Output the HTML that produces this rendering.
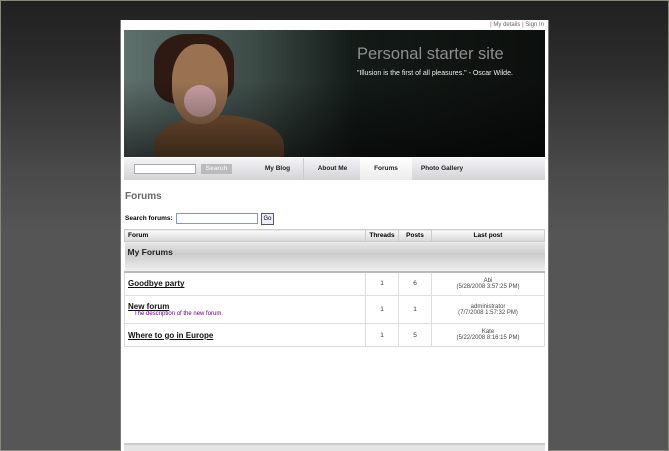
<!DOCTYPE html>
<html><head><style>
*{margin:0;padding:0;box-sizing:border-box}
html,body{width:669px;height:451px;overflow:hidden;background:#3a3a3a}
body{font-family:"Liberation Sans",sans-serif;position:relative}
#bg{position:absolute;left:0;top:0;width:669px;height:451px;background:linear-gradient(180deg,#202020 0px,#2e2e2e 70px,#4a4a4a 170px,#555 230px,#565656 451px);border:1px solid #8a8878}
#page{position:absolute;left:120px;top:20px;width:429px;height:431px;background:#fff;border-left:1px solid #777;border-right:1px solid #777}
.top{position:absolute;right:4px;top:2px;font-size:6px;color:#666}
.top span{color:#a04080}
#hdr{position:absolute;left:3px;top:10px;width:421px;height:127px;background:linear-gradient(90deg,#5e706c 0%,#3e4c48 30%,#131a17 55%,#0c0f0d 100%);overflow:hidden}
#hdr .shade{position:absolute;left:0;top:0;right:0;bottom:0;background:linear-gradient(rgba(0,0,0,0) 40%,rgba(0,0,0,.55))}
.face{position:absolute;left:48px;top:14px;width:56px;height:80px;border-radius:45%;background:#9a7252}
.hair{position:absolute;left:30px;top:4px;width:80px;height:70px;border-radius:40% 40% 30% 30%;background:#2e1a12}
.body{position:absolute;left:30px;top:85px;width:130px;height:60px;border-radius:50% 50% 0 0;background:#7e5636}
.gum{position:absolute;left:60px;top:55px;width:32px;height:32px;border-radius:50%;background:#c9a0a2}
.title{position:absolute;left:233px;top:15px;color:#8e8e8e;font-size:16.5px}
.quote{position:absolute;left:233px;top:40px;color:#eee;font-size:7px}
#nav{position:absolute;left:3px;top:138px;width:421px;height:22px;background:linear-gradient(#f4f4f6,#d4d4d8);font-size:6.5px;font-weight:bold;color:#222}
#nav .in{position:absolute;left:10px;top:6px;width:62px;height:10px;border:1px solid #aaa;background:#fff}
#nav .btn{position:absolute;left:77px;top:6px;width:31px;height:10px;background:#bbb;color:#eee;text-align:center;line-height:10px}
#nav .it{position:absolute;top:0;height:22px;line-height:22px;text-align:center}
h1{position:absolute;left:4px;top:171px;font-size:10px;color:#666}
.sf{position:absolute;left:4px;top:195px;font-size:6.5px;font-weight:bold}
.sf i{position:absolute;left:51px;top:-2px;width:82px;height:11px;border:1px solid #7a9ac0}
.sf b{position:absolute;left:136px;top:-2px;width:13px;height:12px;border:1px solid #557;font-size:6px;font-weight:normal;line-height:10px;text-align:center;background:#eef}
table{position:absolute;left:3px;top:209px;width:421px;border-collapse:collapse;font-size:6.5px}
th{background:linear-gradient(#fafafa,#d8d8d8);height:12px;border:1px solid #ccc;font-weight:bold}
td{border:1px solid #ddd;text-align:center;color:#336}
td.f{text-align:left;padding-left:3px;color:#000}
td.f a{font-size:8px;font-weight:bold;text-decoration:underline;color:#111}
td.f div{color:#608;padding-left:6px;font-size:6px}
.cat td{background:linear-gradient(#e6e6e6,#ccc 40%,#f0f0f0);height:30px;text-align:left;vertical-align:top;padding:5px 3px;font-size:8.5px;font-weight:bold;color:#222;border:none;border-bottom:2px solid #bbb}
.lp{color:#444;font-size:6px}
.foot{position:absolute;left:3px;top:423px;width:421px;height:8px;background:#e4e4e4;border-top:2px solid #ccc}
</style></head><body>
<div id="bg"></div>
<div id="page">
<div class="top"><span>|</span> My details <span>|</span> Sign In</div>
<div id="hdr"><div class="hair"></div><div class="body"></div><div class="face"></div><div class="gum"></div><div class="shade"></div>
<div class="title">Personal starter site</div>
<div class="quote">"Illusion is the first of all pleasures." - Oscar Wilde.</div></div>
<div id="nav"><div class="in"></div><div class="btn">Search</div>
<div class="it" style="left:128px;width:52px;border-right:1px solid #ccc">My Blog</div>
<div class="it" style="left:181px;width:55px">About Me</div>
<div class="it" style="left:236px;width:52px;background:linear-gradient(#fff,#ececee)">Forums</div>
<div class="it" style="left:288px;width:60px">Photo Gallery</div></div>
<h1>Forums</h1>
<div class="sf">Search forums: <i></i><b>Go</b></div>
<table>
<tr><th style="text-align:left;padding-left:3px">Forum</th><th style="width:33px">Threads</th><th style="width:33px">Posts</th><th style="width:113px">Last post</th></tr>
<tr class="cat"><td colspan="4">My Forums</td></tr>
<tr style="height:24px"><td class="f"><a>Goodbye party</a></td><td>1</td><td>6</td><td class="lp">Abi<br>(5/28/2008 3:57:25 PM)</td></tr>
<tr style="height:28px"><td class="f"><a>New forum</a><div>The description of the new forum.</div></td><td>1</td><td>1</td><td class="lp">administrator<br>(7/7/2008 1:57:32 PM)</td></tr>
<tr style="height:23px"><td class="f"><a>Where to go in Europe</a></td><td>1</td><td>5</td><td class="lp">Kate<br>(5/22/2008 8:16:15 PM)</td></tr>
</table>
<div class="foot"></div>
</div>
</body></html>
